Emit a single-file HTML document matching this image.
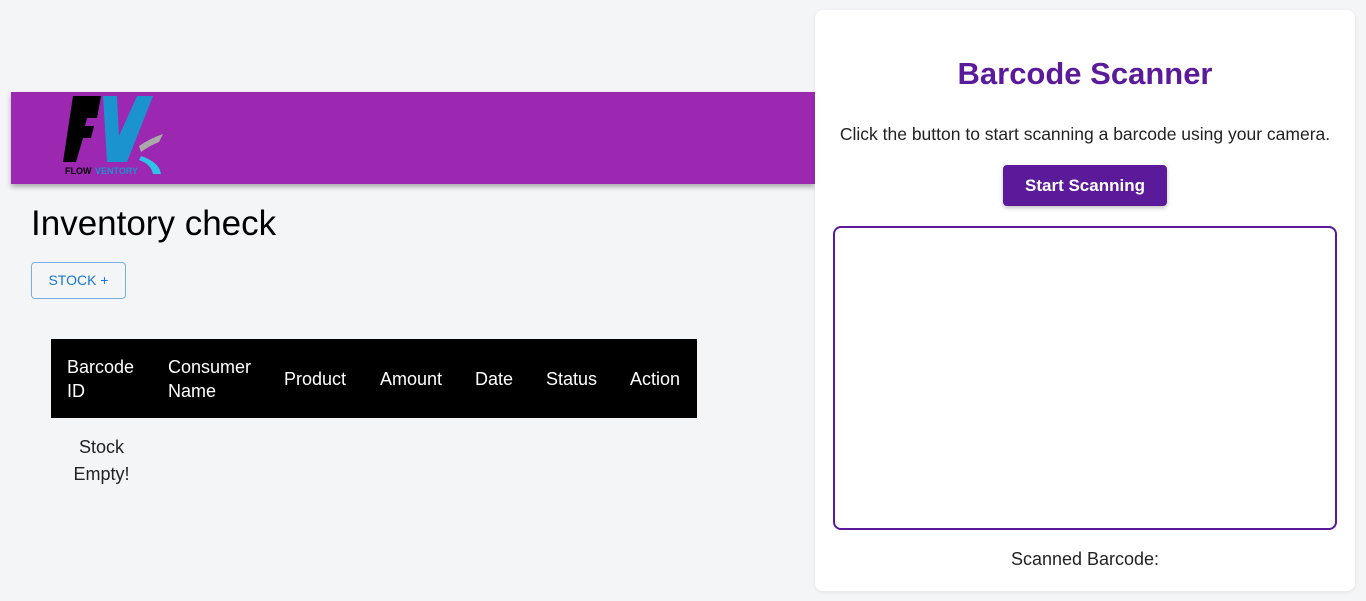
<!DOCTYPE html>
<html><head><meta charset="utf-8"><style>
*{margin:0;padding:0;box-sizing:border-box}
body{width:1366px;height:601px;background:#f4f5f7;font-family:"Liberation Sans",sans-serif;position:relative;overflow:hidden}
.a{position:absolute;white-space:nowrap}
.hdr{left:11px;top:92px;width:804px;height:92px;background:#9c27b0;box-shadow:0 3px 5px rgba(0,0,0,.3)}
.th{color:#fff;font-size:18px;line-height:24px}
.card{left:815px;top:10px;width:540px;height:581px;background:#fff;border-radius:8px;box-shadow:0 1px 4px rgba(0,0,0,.08)}
</style></head><body>
<div class="a hdr">
<svg class="a" style="left:50px;top:4px" width="110" height="84" viewBox="0 0 110 84">
<path d="M12 0H40L36 22H26L24 30H33L30 42H22L15 66H2Z" fill="#000"/>
<path d="M42 0H56L58 40L76 0H92L66 66H46Z" fill="#1a93cf"/>
<path d="M78 50Q90 42 102 38L98 46Q88 50 80 56Z" fill="#aaa"/>
<path d="M80 60Q98 66 100 78L92 78Q90 68 78 64Z" fill="#2ec4e8"/>
<text x="4" y="78" font-size="9" font-weight="bold" font-family="Liberation Sans" fill="#000">FLOW</text>
<text x="34" y="78" font-size="9" font-weight="bold" font-family="Liberation Sans" fill="#1a93cf">VENTORY</text>
</svg>
</div>
<div class="a" style="left:31px;top:204px;font-size:35px;color:#000">Inventory check</div>
<div class="a" style="left:31px;top:262px;width:95px;height:37px;border:1px solid #7aaee6;border-radius:4px;color:#1976d2;font-size:14px;line-height:35px;text-align:center">STOCK +</div>
<div class="a" style="left:51px;top:339px;width:646px;height:79px;background:#000"></div>
<div class="a th" style="left:67px;top:355px">Barcode<br>ID</div>
<div class="a th" style="left:168px;top:355px">Consumer<br>Name</div>
<div class="a th" style="left:284px;top:367px">Product</div>
<div class="a th" style="left:380px;top:367px">Amount</div>
<div class="a th" style="left:475px;top:367px">Date</div>
<div class="a th" style="left:546px;top:367px">Status</div>
<div class="a th" style="left:630px;top:367px">Action</div>
<div class="a" style="left:51px;top:434px;width:101px;text-align:center;font-size:18px;line-height:27px;color:#222;white-space:normal">Stock<br>Empty!</div>
<div class="a card"></div>
<div class="a" style="left:815px;width:540px;top:56px;text-align:center;font-size:31px;font-weight:bold;color:#5b1a9a">Barcode Scanner</div>
<div class="a" style="left:815px;width:540px;top:124px;text-align:center;font-size:17.5px;color:#222">Click the button to start scanning a barcode using your camera.</div>
<div class="a" style="left:1003px;top:165px;width:164px;height:41px;background:#5b1a9a;border-radius:4px;color:#fff;font-weight:bold;font-size:17px;line-height:41px;text-align:center;box-shadow:0 2px 4px rgba(0,0,0,.25)">Start Scanning</div>
<div class="a" style="left:833px;top:226px;width:504px;height:304px;border:2px solid #5b1a9a;border-radius:8px"></div>
<div class="a" style="left:815px;width:540px;top:549px;text-align:center;font-size:18px;color:#222">Scanned Barcode:</div>
</body></html>
